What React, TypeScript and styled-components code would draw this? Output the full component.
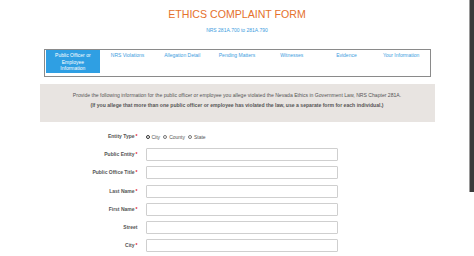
import React from 'react'
import styled, { createGlobalStyle } from 'styled-components'

const GlobalStyle = createGlobalStyle`
  html, body {
    margin: 0;
    padding: 0;
    background: #ffffff;
    font-family: "Liberation Sans", Arial, sans-serif;
    overflow: hidden;
  }
`

const Page = styled.div`
  width: 474px;
  height: 256px;
  padding-top: 8px;
  box-sizing: border-box;
  display: flex;
  flex-direction: column;
  align-items: center;
`

const Title = styled.h1`
  margin: 0;
  font-weight: 400;
  font-size: 10.6px;
  line-height: 12px;
  color: #e5712b;
`

const SubTitle = styled.div`
  margin-top: 7px;
  font-size: 5px;
  line-height: 6px;
  color: #3d9de0;
`

const Tabs = styled.div`
  margin-top: 16px;
  width: 387px;
  height: 28px;
  box-sizing: border-box;
  border: 1px solid #8a8a8a;
  display: grid;
  grid-template-columns: repeat(7, 1fr);
  padding: 0 1px 3px 1px;
`

const Tab = styled.div<{ $active?: boolean }>`
  background: ${p => (p.$active ? '#2f9fe3' : 'transparent')};
  color: ${p => (p.$active ? '#ffffff' : '#3d9de0')};
  font-size: 5px;
  line-height: 6.5px;
  text-align: center;
  padding: ${p => (p.$active ? '2px 6px 0' : '2px 1px 0')};
`

const InfoBox = styled.div`
  margin-top: 7px;
  width: 395px;
  height: 38px;
  box-sizing: border-box;
  background: #e8e4e1;
  padding-top: 8px;
  text-align: center;
  color: #555555;
`

const InfoLine = styled.div<{ $bold?: boolean }>`
  font-size: 5.1px;
  font-weight: ${p => (p.$bold ? 700 : 400)};
  line-height: 6px;
  margin-bottom: 4px;
`

const Form = styled.div`
  margin-top: 8px;
  width: 395px;
  display: grid;
  grid-template-columns: 98px 192px;
  column-gap: 8px;
  row-gap: 5.2px;
  align-items: center;
`

const Label = styled.div`
  text-align: right;
  font-size: 5px;
  font-weight: 700;
  color: #555555;
  line-height: 13px;
`

const Req = styled.span`
  color: #e0202a;
  margin-left: 1px;
`

const Field = styled.div`
  height: 13px;
  box-sizing: border-box;
  border: 1px solid #cfcfcf;
  border-radius: 1px;
  background: #ffffff;
`

const Radios = styled.div`
  display: flex;
  align-items: center;
  gap: 3px;
  font-size: 5px;
  color: #555555;
  height: 12px;
`

const RadioItem = styled.label`
  display: flex;
  align-items: center;
  gap: 2px;
`

const Dot = styled.span<{ $on?: boolean }>`
  width: 4px;
  height: 4px;
  border-radius: 50%;
  box-sizing: border-box;
  border: ${p => (p.$on ? '1.4px solid #333' : '0.7px solid #777')};
  background: #fff;
`

const ScrollThumb = styled.div`
  position: fixed;
  top: 0;
  right: 0;
  width: 4px;
  height: 192px;
  background: #3b3b3b;
  border-left: 1px solid #9a9a9a;
`

const tabs = [
  'Public Officer or Employee Information',
  'NRS Violations',
  'Allegation Detail',
  'Pending Matters',
  'Witnesses',
  'Evidence',
  'Your Information',
]

const fields: { label: string; req: boolean }[] = [
  { label: 'Public Entity', req: true },
  { label: 'Public Office Title', req: true },
  { label: 'Last Name', req: true },
  { label: 'First Name', req: true },
  { label: 'Street', req: false },
  { label: 'City', req: true },
]

export default function App() {
  return (
    <>
      <GlobalStyle />
      <Page>
        <Title>ETHICS COMPLAINT FORM</Title>
        <SubTitle>NRS 281A.700 to 281A.790</SubTitle>
        <Tabs>
          {tabs.map((t, i) => (
            <Tab key={t} $active={i === 0}>{t}</Tab>
          ))}
        </Tabs>
        <InfoBox>
          <InfoLine>
            Provide the following information for the public officer or employee you allege violated the Nevada Ethics in Government Law, NRS Chapter 281A.
          </InfoLine>
          <InfoLine $bold>
            (If you allege that more than one public officer or employee has violated the law, use a separate form for each individual.)
          </InfoLine>
        </InfoBox>
        <Form>
          <Label>Entity Type<Req>*</Req></Label>
          <Radios>
            <RadioItem><Dot $on />City</RadioItem>
            <RadioItem><Dot />County</RadioItem>
            <RadioItem><Dot />State</RadioItem>
          </Radios>
          {fields.map(f => (
            <React.Fragment key={f.label}>
              <Label>{f.label}{f.req && <Req>*</Req>}</Label>
              <Field />
            </React.Fragment>
          ))}
        </Form>
      </Page>
      <ScrollThumb />
    </>
  )
}
